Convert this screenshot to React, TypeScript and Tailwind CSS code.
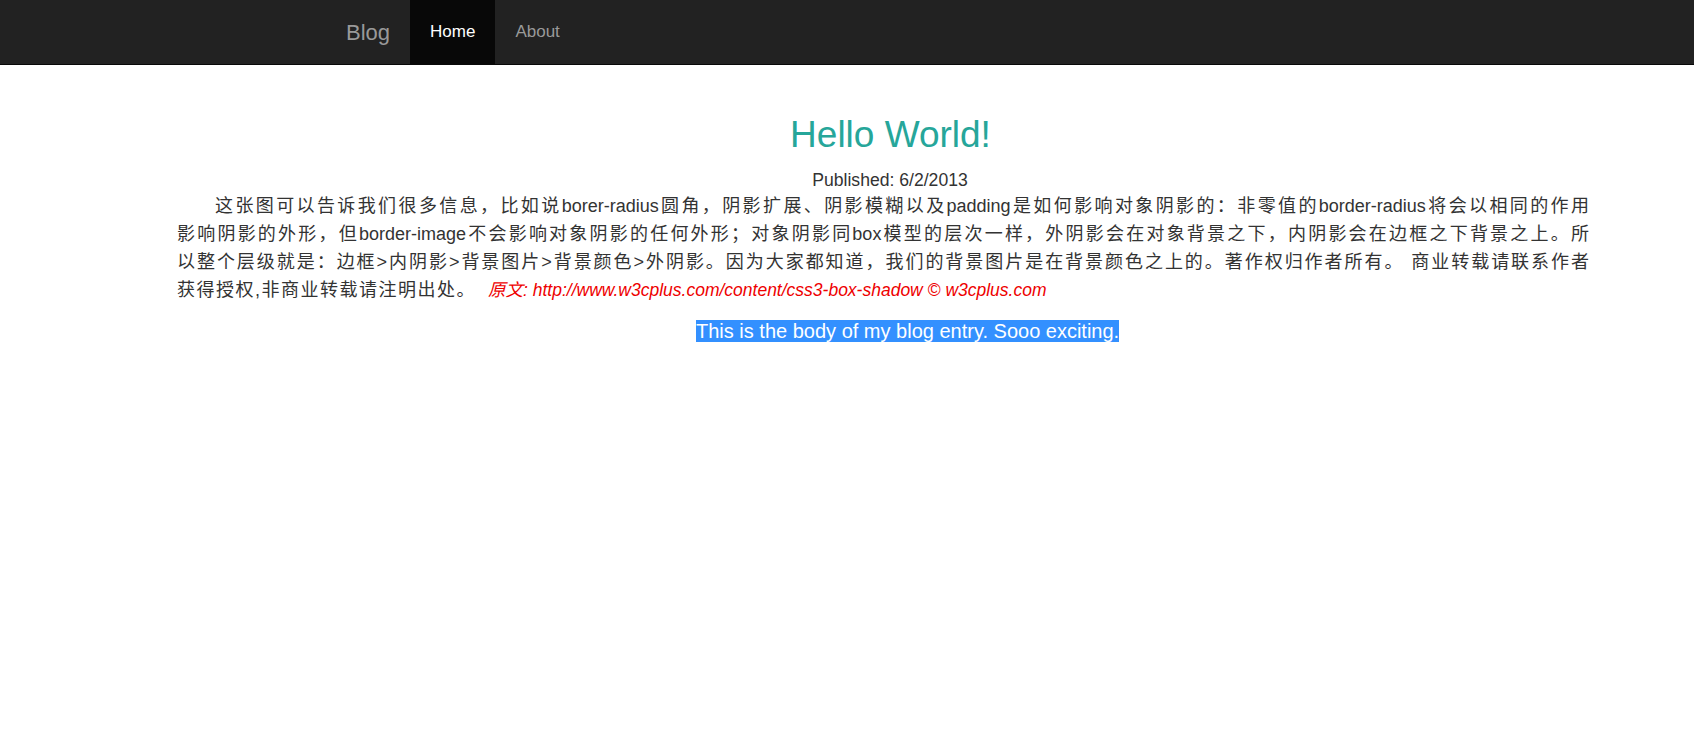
import React from 'react';

const font = { fontFamily: '"Liberation Sans", Arial, "Noto Sans CJK SC", sans-serif' };

const lines = [
  '这张图可以告诉我们很多信息，比如说borer-radius圆角，阴影扩展、阴影模糊以及padding是如何影响对象阴影的：非零值的border-radius将会以相同的作用',
  '影响阴影的外形，但border-image不会影响对象阴影的任何外形；对象阴影同box模型的层次一样，外阴影会在对象背景之下，内阴影会在边框之下背景之上。所',
  '以整个层级就是：边框>内阴影>背景图片>背景颜色>外阴影。因为大家都知道，我们的背景图片是在背景颜色之上的。著作权归作者所有。 商业转载请联系作者',
];

const App: React.FC = () => {
  return (
    <div className="min-h-screen bg-white text-[#333]" style={font}>
      <div className="h-[65px] bg-[#222] border-b border-[#080808]">
        <div className="flex h-full ml-[346px]">
          <a className="-ml-5 px-5 flex items-center text-[22px] text-[#999]">Blog</a>
          <a className="px-5 flex items-center bg-[#080808] text-[17px] text-white">Home</a>
          <a className="px-5 flex items-center text-[17px] text-[#999]">About</a>
        </div>
      </div>

      <div className="ml-[177px] w-[1412px]">
        <h1 className="mt-[50px] pl-[15px] text-center text-[37px] leading-[40px] text-[#26a69a]">Hello World!</h1>
        <div className="mt-[15px] pl-[14px] text-center text-[17.6px] leading-[20px]">Published: 6/2/2013</div>
        <div className="mt-[2px] text-[18px] leading-[28px]">
          {lines.map((line, i) => (
            <div
              key={i}
              className={`whitespace-nowrap text-justify [text-align-last:justify] ${i === 0 ? 'pl-[38px]' : ''}`}
            >
              {line}
            </div>
          ))}
          <div className="whitespace-nowrap">
            <span className="tracking-[1.5px]">获得授权,非商业转载请注明出处。</span>
            <span className="italic ml-[12px] text-[17.5px] text-[#e00]">原文: http://www.w3cplus.com/content/css3-box-shadow © w3cplus.com</span>
          </div>
        </div>
        <div className="mt-[16px] pl-[519px] text-[20px] leading-[23px]">
          <span className="bg-[#3390ff] text-white">This is the body of my blog entry. Sooo exciting. </span>
        </div>
      </div>
    </div>
  );
};

export default App;
